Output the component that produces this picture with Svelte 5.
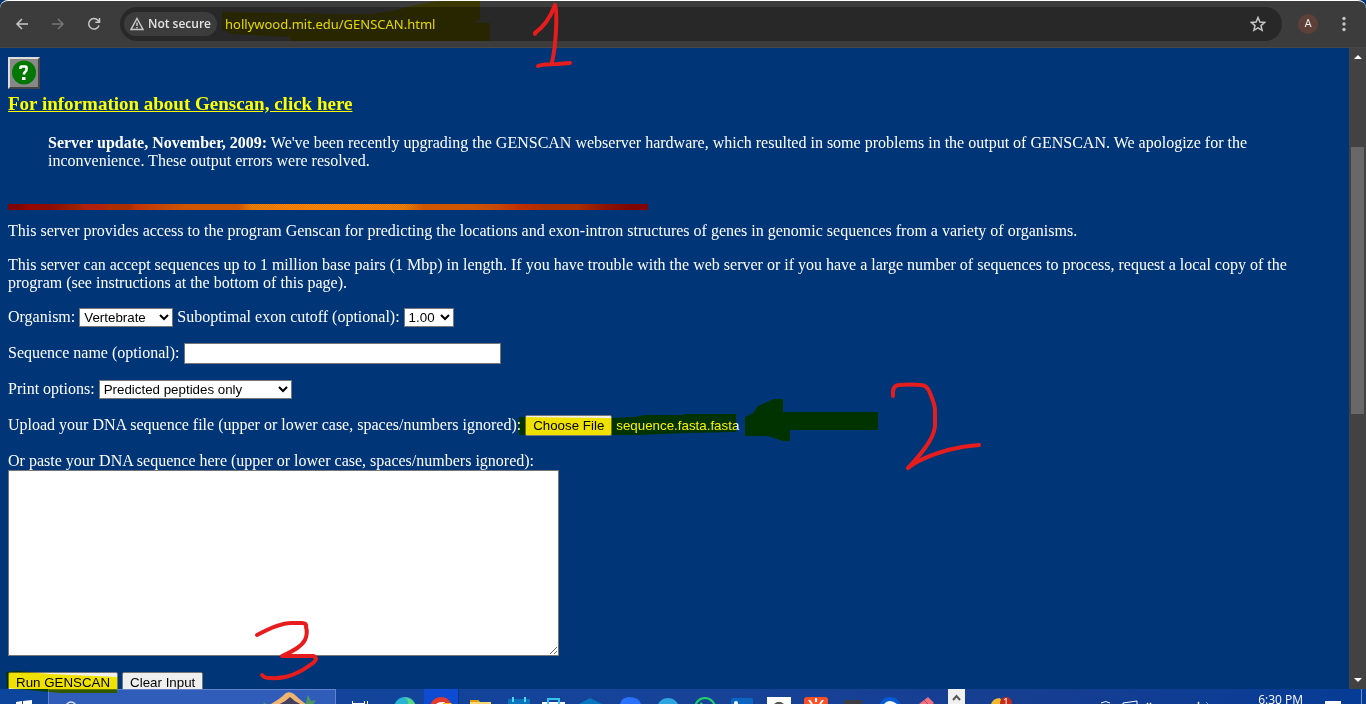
<script>
  import { onMount } from 'svelte';

  let upload;
  let organism = $state('Vertebrate');
  let cutoff = $state('1.00');
  let output = $state('Predicted peptides only');
  let name = $state('');
  let sequence = $state('');

  onMount(() => {
    const transfer = new DataTransfer();
    transfer.items.add(new File(['>'], 'sequence.fasta.fasta'));
    upload.files = transfer.files;
  });
</script>

<div class="window">
  <header class="toolbar">
    <nav class="nav">
      <button class="icon" aria-label="Back">
        <svg width="16" height="16" viewBox="0 0 16 16"><path d="M14 8H3M8 3L3 8l5 5" /></svg>
      </button>
      <button class="icon dim" aria-label="Forward">
        <svg width="16" height="16" viewBox="0 0 16 16"><path d="M2 8h11M8 3l5 5-5 5" /></svg>
      </button>
      <button class="icon" aria-label="Reload">
        <svg width="16" height="16" viewBox="0 0 16 16"><path d="M13 9.5A5.3 5.3 0 1 1 12 4.3L13.500 6M13.500 2v4.200H9.300" /></svg>
      </button>
    </nav>
    <div class="address">
      <button class="security">
        <svg width="14" height="14" viewBox="0 0 14 14"><path d="M7 1.500L13 12.500H1zM7 5.500v3.500M7 10v1.300" /></svg>
        Not secure
      </button>
      <input class="url" aria-label="Address" value="hollywood.mit.edu/GENSCAN.html" />
      <button class="icon" aria-label="Bookmark">
        <svg width="16" height="16" viewBox="0 0 16 16"><path d="M8 1.500l1.900 4.500 4.800.4-3.700 3.200 1.100 4.700L8 11.800l-4.100 2.500L5 9.600 1.300 6.400l4.800-.4z" /></svg>
      </button>
    </div>
    <button class="avatar" aria-label="Profile">A</button>
    <button class="icon" aria-label="Menu">
      <svg width="16" height="16" viewBox="0 0 16 16" class="dots"><circle cx="8" cy="2.500" r="1.700" /><circle cx="8" cy="8" r="1.700" /><circle cx="8" cy="13.500" r="1.700" /></svg>
    </button>
  </header>

  <div class="view">
    <main>
      <a class="help" href="#info" aria-label="Help">
        <svg width="32" height="32" viewBox="0 0 32 32">
          <path d="M0 0h32v32H0z" fill="#444" /><path d="M0 0h32l-2 2H2v28l-2 2z" fill="#ddd" /><path d="M2 2h28v28H2z" fill="#888" />
          <circle cx="16" cy="15.500" r="12" fill="#007800" />
          <path d="M12.500 12v-1.500q0-1 1-1h4q1 0 1 1v2.200q0 1-1.200 2T15.800 17.500" fill="none" stroke="#fff" stroke-width="2.600" />
          <path d="M14 20h3.500v3H14z" fill="#fff" />
        </svg>
      </a>
      <h1><a href="#info">For information about Genscan, click here</a></h1>
      <blockquote><b>Server update, November, 2009:</b> We've been recently upgrading the GENSCAN webserver hardware, which resulted in some problems in the output of GENSCAN. We apologize for the inconvenience. These output errors were resolved.</blockquote>
      <div class="rule"></div>
      <p>This server provides access to the program Genscan for predicting the locations and exon-intron structures of genes in genomic sequences from a variety of organisms.</p>
      <p>This server can accept sequences up to 1 million base pairs (1 Mbp) in length. If you have trouble with the web server or if you have a large number of sequences to process, request a local copy of the program (see instructions at the bottom of this page).</p>
      <form>
        <div class="row">
          <label for="organism">Organism:</label>
          <select id="organism" class="organism" bind:value={organism}>
            <option>Vertebrate</option><option>Arabidopsis</option><option>Maize</option>
          </select>
          <label for="cutoff">Suboptimal exon cutoff (optional):</label>
          <select id="cutoff" class="cutoff" bind:value={cutoff}>
            <option>1.00</option><option>0.50</option><option>0.25</option><option>0.10</option>
          </select>
        </div>
        <div class="row">
          <label for="name">Sequence name (optional):</label>
          <input id="name" class="name" type="text" bind:value={name} />
        </div>
        <div class="row">
          <label for="output">Print options:</label>
          <select id="output" class="output" bind:value={output}>
            <option>Predicted peptides only</option><option>Predicted CDS and peptides</option>
          </select>
        </div>
        <div class="row">
          <label for="upload">Upload your DNA sequence file (upper or lower case, spaces/numbers ignored):</label>
          <input id="upload" class="upload" type="file" bind:this={upload} />
        </div>
        <div>
          <label class="paste" for="sequence">Or paste your DNA sequence here (upper or lower case, spaces/numbers ignored):</label>
          <textarea id="sequence" bind:value={sequence}></textarea>
        </div>
        <div class="actions">
          <button type="button">Run GENSCAN</button>
          <button type="reset">Clear Input</button>
        </div>
      </form>
    </main>
    <div class="scrollbar">
      <svg width="17" height="17" viewBox="0 0 17 17"><path d="M5 11l4-4 4 4z" fill="#fff" /></svg>
      <div class="track"><div class="thumb"></div></div>
      <svg width="17" height="17" viewBox="0 0 17 17"><path d="M5 6l4 4 4-4z" fill="#fff" /></svg>
    </div>
  </div>

  <footer class="taskbar">
    <button class="start" aria-label="Start"><svg width="48" height="15"><path d="M16 13l6-1v3h-6zM23 12l9-1v4h-9z" fill="#fff" /></svg></button>
    <button class="search" aria-label="Search">
      <svg width="40" height="15"><circle cx="22" cy="17" r="5" fill="none" stroke="#dfe6f5" stroke-width="1.500" /></svg>
      <svg width="70" height="15">
        <path d="M9 15l-4-3 4 1zM48 15l3-10 3 6 5-1-3 5z" fill="#4b9464" />
        <path d="M12 15Q23 9 29 3q4-2 8 1 6 6 13 11z" fill="#efb571" />
        <path d="M20 15q7-2 13-8 6 6 13 8z" fill="#45405f" />
      </svg>
    </button>
    <button class="taskview" aria-label="Task view"><svg width="51" height="15"><path d="M16.500 12v3M28.500 12v3M31.500 12v3M16 14.500h12" fill="none" stroke="#fff" /></svg></button>
    <div class="apps">
      <button aria-label="Edge"><svg width="37" height="15"><circle cx="18" cy="19" r="11" fill="#27b5d3" /><path d="M16 8.200Q26 8 29 18H20q3-8-4-9.800z" fill="#5bd77c" /></svg></button>
      <button class="active" aria-label="Chrome"><svg width="37" height="15"><circle cx="17" cy="19" r="11" fill="#e33b2e" /><path d="M12 15q2-2 6-2h3l-1 2z" fill="#fff" /><path d="M19 14h8l1 1h-9z" fill="#fbc116" /></svg></button>
      <button aria-label="File Explorer"><svg width="37" height="15"><path d="M9 11h8l2 2h11v2H9z" fill="#f9d66f" /><path d="M9 11h8l1 2H9z" fill="#dfa000" /></svg></button>
      <button aria-label="Calendar"><svg width="37" height="15"><path d="M10 10h22v5H10z" fill="#0b74bd" /><path d="M14 8h2v5h-2zM26 8h2v5h-2z" fill="#50d7f5" /></svg></button>
      <button aria-label="Store"><svg width="37" height="15"><path d="M7 13h23v2H7z" fill="#fff" /><path d="M13 15v-5h11v5" fill="none" stroke="#35c4ed" stroke-width="2" /></svg></button>
      <button aria-label="Mail"><svg width="37" height="15"><path d="M7 15l11-6 12 6z" fill="#0875c1" /></svg></button>
      <button aria-label="Browser"><svg width="37" height="15"><path d="M11 15q2-7 9-7 10 0 12 7z" fill="#2a71ff" /></svg></button>
      <button aria-label="Telegram"><svg width="37" height="15"><circle cx="22" cy="20" r="11" fill="#2ca5e0" /></svg></button>
      <button aria-label="WhatsApp"><svg width="37" height="15"><circle cx="22" cy="19" r="10" fill="none" stroke="#20d267" stroke-width="2" /><path d="M18 13l-1 2h3z" fill="#20d267" /></svg></button>
      <button aria-label="LinkedIn"><svg width="37" height="15"><path d="M11 11q0-2 2-2h18q2 0 2 2v4H11z" fill="#0a66c2" /><circle cx="16" cy="14" r="2" fill="#fff" /></svg></button>
      <button aria-label="Assistant"><svg width="37" height="15"><path d="M10 8h24v7H10z" fill="#fff" /><path d="M17 15l3-2h4l3 2z" fill="#555" /></svg></button>
      <button aria-label="Automation"><svg width="37" height="15"><rect x="10" y="8" width="24" height="12" rx="3" fill="#ff4f24" /><path d="M22 9v4M15 11l3 4M29 11l-3 4" stroke="#fff" stroke-width="2" /></svg></button>
      <button aria-label="Terminal"><svg width="37" height="15"><path d="M13 11h18v4H13z" fill="#3d3d42" /></svg></button>
      <button aria-label="Sync"><svg width="37" height="15"><circle cx="22" cy="19" r="11" fill="#075bd7" /><path d="M16 15q5-6 13 0z" fill="#fff" /></svg></button>
      <button aria-label="Editor"><svg width="37" height="15"><path d="M14 15l9-7 6 6-1 1z" fill="#f27181" /><path d="M19 11l4 4" stroke="#b44063" /></svg></button>
    </div>
    <button class="more" aria-label="Show hidden icons"><svg width="17" height="15"><path d="M5 11l3.500-4L12 11" fill="none" stroke="#555" stroke-width="2" /></svg></button>
    <div class="badge"><svg width="48" height="15"><path d="M26 15q2-6 9-6l4 6z" fill="#f3b82d" /><circle cx="41" cy="14" r="6" fill="#c42b1c" /></svg><span>1</span></div>
    <div class="tray">
      <svg width="160" height="15"><path d="M52 14q5-3 9 0M74 15v-1l14-2v3" fill="none" stroke="#fff" /><path d="M98 14h1v1h-1zM101 14h1v1h-1zM149 13h1v2h-1zM157 13l2 2" fill="#fff" stroke="#fff" stroke-width=".5" /></svg>
      <time>6:30 PM</time>
      <svg width="16" height="15"><path d="M0 12h16v3H0z" fill="#fff" /></svg>
    </div>
  </footer>

  <svg class="marks highlighter" width="1366" height="704" viewBox="0 0 1366 704">
    <path d="M222 12l118 2h32l20-3 23-6 25-4h40v19l-6 2 16 1v18H290v-4l-58-3-10-4z" />
    <path d="M519 417l91 1 24-1 11-2h39l1-1h51v18l-51 1-45 2H519z" />
    <path d="M745 417l8-4 5-7 16-7h9v13h95v18h-88v11h-7l-15-5h-23z" />
    <path d="M6 672l11-1 33 3 67 3v16H60L7 688z" />
  </svg>
  <svg class="marks pen" width="1366" height="704" viewBox="0 0 1366 704">
    <path d="M535 34v-1Q548 24 555 5q2 1 1 25-1 20-4 32M538 66q5-2 19-2l13-1" />
    <path d="M893 396q-1-11 6-11 13-1 22 0 6 0 9 8 5 12 5 17v16q-1 10-10 22-10 13-17 20 12-10 40-18 15-4 31-5" />
    <path d="M257 635q24-13 36-12h9q5 0 4 4 2 6-1 13-4 8-23 16h31q6 2 0 7-22 17-43 15-6 0-8-3" />
  </svg>
</div>

<style>
  :global(body) { margin: 0; background: #003578; }
  * { box-sizing: border-box; }
  .window { position: relative; display: flex; flex-direction: column; height: 100vh; overflow: hidden; background: #003578; color: #fff; font: 16px/18px "Liberation Serif", "Times New Roman", serif; }
  svg { display: block; flex: none; }
  button { margin: 0; }
  .toolbar { display: flex; align-items: center; flex: none; height: 48px; padding: 0 14px; border-top: 1px solid #fff; border-bottom: 1px solid #484848; background: #3c3c3c; border-radius: 8px 8px 0 0; font-family: "Open Sans", sans-serif; }
  .nav { display: flex; gap: 20px; margin-right: 18px; }
  .icon { display: flex; padding: 0; border: 0; background: none; }
  .icon svg, .security svg { fill: none; stroke: #c7c7c7; stroke-width: 1.5; }
  .icon.dim svg { stroke: #777; }
  .icon .dots { fill: #c7c7c7; stroke: none; }
  .address { display: flex; align-items: center; flex: 1; height: 34px; padding: 0 16px 0 4px; border-radius: 17px; background: #282828; }
  .security { display: flex; align-items: center; gap: 4px; height: 24px; padding: 0 6px; border: 0; border-radius: 12px; background: #3c3c3c; color: #e3e3e3; font: 600 12px/16px "Open Sans", sans-serif; white-space: nowrap; }
  .url { flex: 1; min-width: 0; margin-left: 8px; padding: 0; border: 0; outline: 0; background: none; color: #e3e3e3; font: 13px/20px "Noto Sans", sans-serif; }
  .avatar { width: 20px; height: 20px; margin: 0 18px 0 16px; padding: 0; border: 0; border-radius: 10px; background: #5d4037; color: #eee; font: 11px/20px Roboto, sans-serif; }

  .view { display: flex; flex: 1; min-height: 0; }
  main { flex: 1; min-width: 0; padding: 9px 8px 0; overflow: hidden; }
  .help { display: block; width: 32px; }
  h1 { margin: 4px 0 0; font-size: 19px; line-height: 22px; }
  h1 a { color: #ff0; }
  blockquote { margin: 19px 40px 34px; }
  .rule {
    max-width: 640px; height: 6px;
    background:
      repeating-conic-gradient(rgba(128, 60, 0, .2) 0 25%, transparent 0 50%) 0 0 / 2px 2px,
      linear-gradient(90deg, #800000 2%, #980000 3%, #900800 7%, #a02000 11%, #b81c10 12%, #b82010 15%, #b02c00 16%, #b02c00 19%, #c83408 20%, #d04c08 25%, #d85800 28%, #d85800 36%, #f08000 38%, #ff8400 44%, #ff8800 48%, #ff8800 52%, #ff8400 56%, #f08000 62%, #d85800 65%, #d85800 72%, #d04c08 76%, #c82c00 80%, #b02c00 84%, #b02c00 89%, #901000 93%, #800000 97%);
  }
  p { margin: 16px 0; }
  .rule + p { margin-top: 12px; }
  .row { display: flex; align-items: center; gap: 4px; height: 18px; margin-bottom: 18px; white-space: nowrap; }
  select, .name, textarea { border: 1px solid #767676; border-radius: 0; background: #fff; color: #000; font-family: "Liberation Sans", Arial, sans-serif; }
  select { height: 19px; padding: 0; }
  .organism { width: 94px; }
  .cutoff { width: 50px; }
  .output { width: 193px; }
  .name { width: 317px; height: 21px; padding: 1px 2px; }
  .upload { width: 253px; font-family: "Liberation Sans", Arial, sans-serif; color: #fff; }
  .upload::file-selector-button, .actions button { height: 21px; padding: 1px 7px; border: 1px solid #767676; border-radius: 2px; background: #efefef; color: #000; font-family: "Liberation Sans", Arial, sans-serif; }
  .paste { display: block; }
  textarea { display: block; width: 551px; height: 186px; margin: 0; }
  .actions { display: flex; gap: 4px; margin-top: 16px; }

  .scrollbar { display: flex; flex-direction: column; flex: none; width: 17px; background: #424242; }
  .track { flex: 1; padding: 0 2px; }
  .thumb { height: 44%; margin-top: 82px; background: #686868; }

  .taskbar { display: flex; flex: none; height: 15px; overflow: hidden; background: linear-gradient(90deg, #0d459d, #164398 50%, #163e91 75%, #063c96); }
  .taskbar button { flex: none; padding: 0; border: 0; background: none; }
  .taskbar .search { display: flex; justify-content: space-between; width: 288px; padding-right: 8px; border: solid #6382cb; border-width: 1px 1px 0; background: #315dba; }
  .apps { display: flex; }
  .apps .active { background: linear-gradient(90deg, #0d4bd2 34px, #0b3381 34px, #0b3381 35px, transparent 35px); }
  .taskbar .more { margin-left: 6px; background: #f0f0f0; }
  .badge { display: flex; }
  .badge span { margin-left: -10px; font: 10px/27px "Open Sans", sans-serif; }
  .tray { display: flex; margin-left: auto; margin-right: 4px; padding-right: 20px; border-right: 1px solid #6b8fc9; }
  time { margin: 0 22px 0 0; padding-left: 49px; font: 12px/22px "Open Sans", sans-serif; white-space: nowrap; }

  .marks { position: absolute; top: 0; left: 0; pointer-events: none; }
  .highlighter { fill: #fff200; mix-blend-mode: multiply; }
  .pen { fill: none; stroke: #e71d1d; stroke-width: 4; stroke-linecap: round; stroke-linejoin: round; }
</style>
